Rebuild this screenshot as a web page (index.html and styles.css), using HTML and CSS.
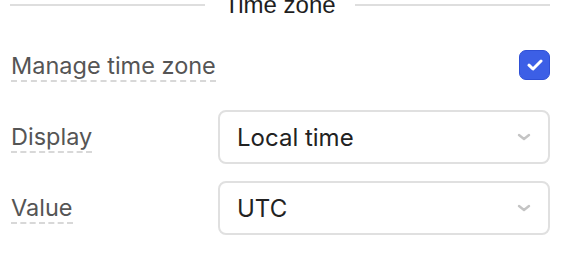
FILE: index.html
```html
<!DOCTYPE html>
<html lang="en">
<head>
<meta charset="utf-8">
<link rel="stylesheet" href="styles.css">
</head>
<body>
<section class="panel">
  <div class="legend">
    <span class="legend-line"></span>
    <span class="legend-text">Time zone</span>
    <span class="legend-line"></span>
  </div>
  <div class="rows">
    <div class="row">
      <span class="label">Manage time zone</span>
      <div class="control control-end">
        <span class="checkbox">
          <svg width="16" height="12" viewBox="0 0 16 12"><path d="M2 6.2l4 3.8L14 2" fill="none" stroke="#fff" stroke-width="3" stroke-linecap="round" stroke-linejoin="round"/></svg>
        </span>
      </div>
    </div>
    <div class="row">
      <span class="label">Display</span>
      <div class="control">
        <div class="select">
          <span class="select-value">Local time</span>
          <svg class="chevron" width="14" height="8" viewBox="0 0 14 8"><path d="M2 2l5 4 5-4" fill="none" stroke="#c4c4c4" stroke-width="2.4" stroke-linecap="round" stroke-linejoin="round"/></svg>
        </div>
      </div>
    </div>
    <div class="row">
      <span class="label">Value</span>
      <div class="control">
        <div class="select">
          <span class="select-value">UTC</span>
          <svg class="chevron" width="14" height="8" viewBox="0 0 14 8"><path d="M2 2l5 4 5-4" fill="none" stroke="#c4c4c4" stroke-width="2.4" stroke-linecap="round" stroke-linejoin="round"/></svg>
        </div>
      </div>
    </div>
  </div>
</section>
</body>
</html>
```

FILE: styles.css
```css
html, body {
  margin: 0;
  padding: 0;
  background: #ffffff;
}

body {
  font-family: Inter, "Noto Sans", sans-serif;
  overflow: hidden;
}

.panel {
  width: 540px;
  margin-left: 10px;
}

.legend {
  display: flex;
  align-items: center;
  height: 10px;
  gap: 19px;
}

.legend-line {
  flex: 1;
  height: 2px;
  background: #dedede;
}

.legend-text {
  font-family: "Liberation Sans", Arial, sans-serif;
  font-size: 24px;
  line-height: 10px;
  color: #1e1e1e;
  white-space: nowrap;
}

.rows {
  display: flex;
  flex-direction: column;
  gap: 17px;
  padding-top: 29px;
}

.row {
  display: grid;
  grid-template-columns: 208px 1fr;
  align-items: center;
  height: 54px;
}

.label {
  justify-self: start;
  margin-left: 1px;
  font-size: 23.5px;
  line-height: 29px;
  color: #555555;
  border-bottom: 2px dashed #d8d8d8;
  white-space: nowrap;
}

.control {
  display: flex;
  align-items: center;
  height: 54px;
}

.control-end {
  justify-content: flex-end;
}

.checkbox {
  width: 31px;
  height: 30px;
  box-sizing: border-box;
  border-radius: 7px;
  background: #3c5fe6;
  border: 1px solid #2f50d6;
  display: flex;
  align-items: center;
  justify-content: center;
  margin-top: -2px;
}

.select {
  flex: 1;
  height: 54px;
  box-sizing: border-box;
  border: 2px solid #e0e0e0;
  border-radius: 8px;
  display: flex;
  align-items: center;
  justify-content: space-between;
  padding: 0 17px 0 17px;
}

.select-value {
  font-size: 24px;
  color: #222222;
}

.chevron {
  display: block;
}
```
